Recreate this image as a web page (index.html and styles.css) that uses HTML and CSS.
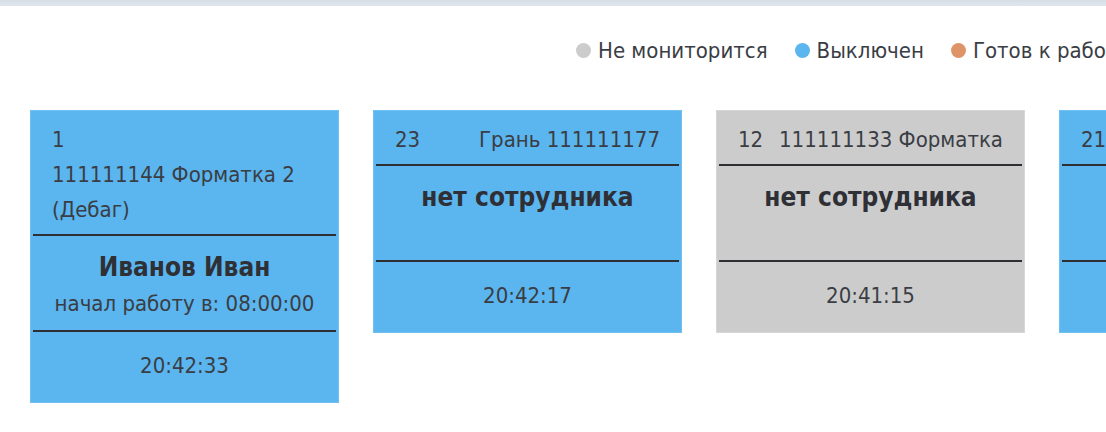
FILE: index.html
```html
<!DOCTYPE html>
<html lang="ru"><head><meta charset="utf-8"><title>Мониторинг</title><link rel="stylesheet" href="styles.css"></head>
<body>
<div class="topbar"></div>
<div class="legend">
  <span class="legend-item"><span class="dot dot-gray"></span>Не мониторится</span>
  <span class="legend-item"><span class="dot dot-blue"></span>Выключен</span>
  <span class="legend-item"><span class="dot dot-orange"></span>Готов к работе</span>
</div>
<div class="cards">
  <div class="card card-blue">
    <div class="card-head">
      <div>1</div>
      <div>111111144 Форматка 2 (Дебаг)</div>
    </div>
    <div class="card-body">
      <div class="name">Иванов Иван</div>
      <div class="sub">начал работу в: 08:00:00</div>
    </div>
    <div class="card-foot">20:42:33</div>
  </div>
  <div class="card card-blue">
    <div class="card-head head-row">
      <span>23</span>
      <span>Грань 111111177</span>
    </div>
    <div class="card-body">
      <div class="name">нет сотрудника</div>
      <div class="sub"></div>
    </div>
    <div class="card-foot">20:42:17</div>
  </div>
  <div class="card card-gray">
    <div class="card-head head-row">
      <span>12</span>
      <span>111111133 Форматка</span>
    </div>
    <div class="card-body">
      <div class="name">нет сотрудника</div>
      <div class="sub"></div>
    </div>
    <div class="card-foot">20:41:15</div>
  </div>
  <div class="card card-blue">
    <div class="card-head head-row">
      <span>21</span>
      <span></span>
    </div>
    <div class="card-body">
      <div class="name">&nbsp;</div>
      <div class="sub"></div>
    </div>
    <div class="card-foot">&nbsp;</div>
  </div>
</div>
</body></html>
```
FILE: styles.css
```css
html, body {
  margin: 0;
  background: #ffffff;
  overflow: hidden;
}
body {
  width: 1106px;
  height: 432px;
  font-family: "DejaVu Sans Condensed", "DejaVu Sans", sans-serif;
  color: #3a3d44;
}
.topbar {
  height: 6px;
  background: linear-gradient(#d7dee6, #e1e6ec);
}
.legend {
  display: flex;
  gap: 27px;
  padding-left: 576px;
  margin-top: 32px;
  height: 24px;
  align-items: center;
  white-space: nowrap;
  font-size: 22px;
  color: #3a3d44;
}
.legend-item {
  display: flex;
  align-items: center;
  gap: 7px;
  flex: none;
}
.dot {
  width: 15px;
  height: 15px;
  border-radius: 50%;
  display: inline-block;
}
.dot-gray { background: #cccccc; }
.dot-blue { background: #5bb5ee; }
.dot-orange { background: #de9468; }
.cards {
  display: flex;
  gap: 34px;
  padding-left: 30px;
  margin-top: 48px;
  align-items: flex-start;
}
.card {
  flex: none;
  width: 309px;
  box-sizing: border-box;
  border: 1px solid #72c0f1;
  padding: 0 2px;
  font-size: 22px;
}
.card-blue { background: #5bb5ee; }
.card-gray { background: #cccccc; border-color: #d6d6d6; }
.card-head {
  padding: 11px 19px 7px;
  line-height: 35px;
}
.head-row {
  display: flex;
  justify-content: space-between;
  gap: 12px;
  white-space: nowrap;
}
.card-body {
  border-top: 2px solid #2d2f33;
  border-bottom: 2px solid #2d2f33;
  padding: 12px 0 8px;
  text-align: center;
}
.name {
  font-weight: bold;
  font-size: 26px;
  line-height: 38px;
  color: #2f3036;
}
.sub {
  line-height: 36px;
  min-height: 36px;
}
.card-foot {
  text-align: center;
  line-height: 36px;
  padding: 16px 0 18px;
}
```
